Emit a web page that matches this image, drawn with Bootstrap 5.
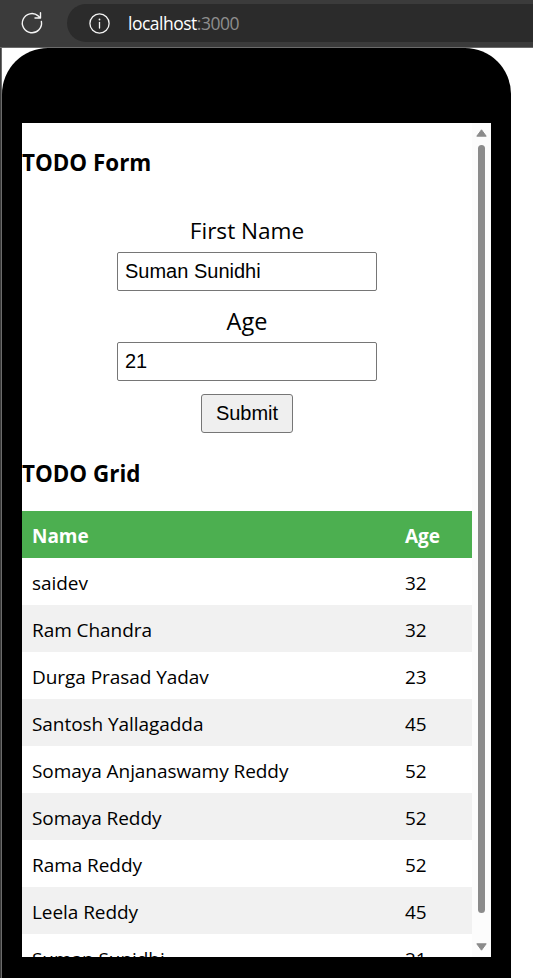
<!DOCTYPE html>
<html lang="en">
<head>
<meta charset="utf-8">
<meta name="viewport" content="width=device-width, initial-scale=1">
<title>localhost:3000</title>
<link href="https://cdn.jsdelivr.net/npm/bootstrap@5.3.0/dist/css/bootstrap.min.css" rel="stylesheet">
<style>
body{font-family:"Open Sans","Noto Sans",sans-serif;color:#000;background:#fff;height:978px}
.window{width:533px;height:978px}
.toolbar{height:48px;background:#3b3b3b;border-bottom:1px solid #6b6b6b;padding:4px 0 5px 20px}
.address{height:38px;margin-left:23px;padding-left:21px;background:#2b2b2b;border-radius:19px 0 0 19px;color:#fff;font-size:17.5px;line-height:37px}
.host{margin-left:17px;letter-spacing:-.5px}
.port{color:#8e8e8e}
.viewport-area{height:930px;border-left:1px solid #3b3b3b}
.viewport-inner{border-left:1px solid #6b6b6b}
.phone{width:509px;height:930px;background:#000;border-radius:46px 46px 0 0;padding:75px 20px 21px}
.screen{background:#fff;height:834px}
.content{width:450px}
.section-title{font-size:22.4px;font-weight:700;line-height:30px;margin:0}
.form-title{padding-top:25px;height:93px}
.grid-title{padding-top:26px;height:78px}
.field-label{font-size:22.6px;line-height:30px;margin-bottom:6px}
.field-box{width:260px;height:39px;border:1px solid #767676;border-radius:2px;padding:0 7px;font:20px "Liberation Sans",Arial,sans-serif;color:#000;background:#fff;outline:0}
.age-label{font-size:23.5px;margin-top:15px}
.submit{width:92px;height:39px;margin-top:13px;border:1px solid #767676;border-radius:3px;background:#efefef;font:20px "Liberation Sans",Arial,sans-serif;color:#000;padding:0}
.people{font-size:19px;line-height:27px;letter-spacing:-.06px;--bs-table-bg:transparent}
.people th,.people td{height:47px;padding:12px 10px 8px!important;border:0;color:#000;box-shadow:none!important}
.people thead th{background:#4caf50;color:#fff}
.people tbody tr:nth-child(even) td{background:#f1f1f1}
.people th:first-child{width:373px}
.rail{width:19px;background:#fcfcfc;padding:6px 0}
.thumb{width:7px;height:768px;margin:8px 0 30px;border-radius:4px;background:#8b8b8b}
</style>
<script src="https://cdn.jsdelivr.net/npm/bootstrap@5.3.0/dist/js/bootstrap.bundle.min.js"></script>
</head>
<body class="overflow-hidden">
<div class="window">
  <header class="toolbar d-flex align-items-center">
    <svg class="flex-shrink-0" width="24" height="24" viewBox="0 0 24 24" fill="none" stroke="#f4f4f4" stroke-width="1.4" stroke-linecap="round" stroke-linejoin="round"><path d="M21.4 10.5A9.6 9.6 0 1 1 18.2 4.9L20.3 6.8M20.5 1.8V7H15"/></svg>
    <div class="address d-flex align-items-center flex-grow-1">
      <svg class="flex-shrink-0" width="23" height="23" viewBox="0 0 23 23" fill="none" stroke="#f4f4f4" stroke-width="1.3" stroke-linecap="round"><circle cx="11.5" cy="11.5" r="9.6"/><path d="M11.5 10.5V16"/><circle cx="11.5" cy="7.5" r=".9" fill="#f4f4f4" stroke="none"/></svg>
      <span class="host">localhost<span class="port">:3000</span></span>
    </div>
  </header>
  <div class="viewport-area"><div class="viewport-inner">
    <main class="phone">
      <div class="screen d-flex overflow-hidden">
        <div class="content flex-shrink-0">
          <h3 class="section-title form-title">TODO Form</h3>
          <form class="d-flex flex-column align-items-center" onsubmit="return false">
            <label class="field-label" for="firstName">First Name</label>
            <input class="field-box" id="firstName" type="text" value="Suman Sunidhi">
            <label class="field-label age-label" for="age">Age</label>
            <input class="field-box" id="age" type="text" value="21">
            <button class="submit" type="submit">Submit</button>
          </form>
          <h3 class="section-title grid-title">TODO Grid</h3>
          <table class="table people mb-0">
            <thead><tr><th>Name</th><th>Age</th></tr></thead>
            <tbody>
              <tr><td>saidev</td><td>32</td></tr>
              <tr><td>Ram Chandra</td><td>32</td></tr>
              <tr><td>Durga Prasad Yadav</td><td>23</td></tr>
              <tr><td>Santosh Yallagadda</td><td>45</td></tr>
              <tr><td>Somaya Anjanaswamy Reddy</td><td>52</td></tr>
              <tr><td>Somaya Reddy</td><td>52</td></tr>
              <tr><td>Rama Reddy</td><td>52</td></tr>
              <tr><td>Leela Reddy</td><td>45</td></tr>
              <tr><td>Suman Sunidhi</td><td>21</td></tr>
            </tbody>
          </table>
        </div>
        <div class="rail d-flex flex-column align-items-center">
          <svg class="flex-shrink-0" width="11" height="8" viewBox="0 0 11 8"><path d="M5.5.8 10.2 7.2H.8Z" fill="#8b8b8b" stroke="#8b8b8b" stroke-linejoin="round"/></svg>
          <div class="thumb flex-shrink-0"></div>
          <svg class="flex-shrink-0" width="11" height="8" viewBox="0 0 11 8"><path d="M5.5 7.2.8.8H10.2Z" fill="#8b8b8b" stroke="#8b8b8b" stroke-linejoin="round"/></svg>
        </div>
      </div>
    </main>
  </div></div>
</div>
</body>
</html>
